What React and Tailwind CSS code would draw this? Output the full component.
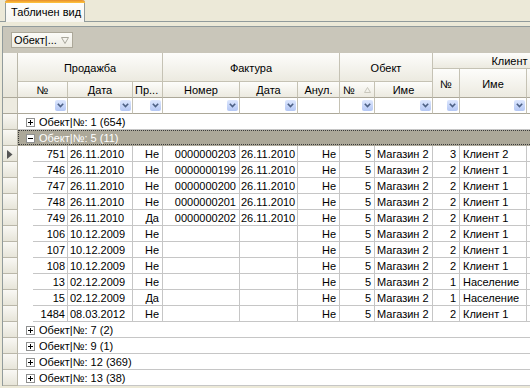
import React from 'react';

const HB = 'flex items-center justify-center border-r border-b border-[#C5C2B4] bg-linear-to-b from-[#FDFDFB] to-[#ECEAE0]';
const FB = 'flex items-center justify-end border-r border-b border-[#C5C2B4] border-b-[#ACA899] bg-white pr-[1px]';

const COLS = [
  { w: 'w-[35px]', a: 'justify-end pr-[2px]' },
  { w: 'w-[65px]', a: 'justify-start pl-[2px]' },
  { w: 'w-[30px]', a: 'justify-end pr-[3px]' },
  { w: 'w-[77px]', a: 'justify-end pr-[3px]' },
  { w: 'w-[58px]', a: 'justify-start pl-[1px]' },
  { w: 'w-[42px]', a: 'justify-end pr-[3px]' },
  { w: 'w-[35px]', a: 'justify-end pr-[3px]' },
  { w: 'w-[58px]', a: 'justify-start pl-[2px]' },
  { w: 'w-[27px]', a: 'justify-end pr-[3px]' },
  { w: 'w-[67px]', a: 'justify-start pl-[3px]' },
  { w: 'w-[60px]', a: 'justify-start pl-[2px]' },
];

const ROWS = [
  { g: 'Обект|№: 1 (654)' },
  { g: 'Обект|№: 5 (11)', sel: true, open: true },
  { d: ['751', '26.11.2010', 'Не', '0000000203', '26.11.2010', 'Не', '5', 'Магазин 2', '3', 'Клиент 2', ''], cur: true },
  { d: ['746', '26.11.2010', 'Не', '0000000199', '26.11.2010', 'Не', '5', 'Магазин 2', '2', 'Клиент 1', ''] },
  { d: ['747', '26.11.2010', 'Не', '0000000200', '26.11.2010', 'Не', '5', 'Магазин 2', '2', 'Клиент 1', ''] },
  { d: ['748', '26.11.2010', 'Не', '0000000201', '26.11.2010', 'Не', '5', 'Магазин 2', '2', 'Клиент 1', ''] },
  { d: ['749', '26.11.2010', 'Да', '0000000202', '26.11.2010', 'Не', '5', 'Магазин 2', '2', 'Клиент 1', ''] },
  { d: ['106', '10.12.2009', 'Не', '', '', 'Не', '5', 'Магазин 2', '2', 'Клиент 1', ''] },
  { d: ['107', '10.12.2009', 'Не', '', '', 'Не', '5', 'Магазин 2', '2', 'Клиент 1', ''] },
  { d: ['108', '10.12.2009', 'Не', '', '', 'Не', '5', 'Магазин 2', '2', 'Клиент 1', ''] },
  { d: ['13', '02.12.2009', 'Не', '', '', 'Не', '5', 'Магазин 2', '1', 'Население', ''] },
  { d: ['15', '02.12.2009', 'Да', '', '', 'Не', '5', 'Магазин 2', '1', 'Население', ''] },
  { d: ['1484', '08.03.2012', 'Не', '', '', 'Не', '5', 'Магазин 2', '2', 'Клиент 1', ''] },
  { g: 'Обект|№: 7 (2)' },
  { g: 'Обект|№: 9 (1)' },
  { g: 'Обект|№: 12 (369)' },
  { g: 'Обект|№: 13 (38)' },
];

function DropBtn() {
  return (
    <span className="flex h-[11px] w-[11px] items-center justify-center rounded-[2px] bg-linear-to-b from-[#DDE7FE] to-[#B4C7F4]">
      <svg width="7" height="5" viewBox="0 0 7 5">
        <path d="M0.8 0.8 L3.5 3.6 L6.2 0.8" fill="none" stroke="#4D6185" strokeWidth="1.6" />
      </svg>
    </span>
  );
}

function ExpandBox({ open }) {
  return (
    <svg width="9" height="9" viewBox="0 0 9 9" className="shrink-0">
      <rect x="0.5" y="0.5" width="8" height="8" fill="#fff" stroke="#8E8F8F" />
      <path d="M2 4.5h5" stroke="#000" />
      {!open && <path d="M4.5 2v5" stroke="#000" />}
    </svg>
  );
}

function Indicator({ cur }) {
  return (
    <div className="flex w-[15px] shrink-0 items-center justify-center border-r border-b border-[#BAB7A9] bg-linear-to-b from-[#F9F8F4] to-[#E7E5D9] pt-[2px]">
      {cur && (
        <svg width="6" height="9" viewBox="0 0 6 9">
          <path d="M0 0 L5.5 4.5 L0 9 Z" fill="#555" />
        </svg>
      )}
    </div>
  );
}

function Header() {
  return (
    <div className="flex h-[45px]">
      <div className="w-[15px] shrink-0 border-r border-b border-[#BAB7A9] border-b-[#ACA899] bg-linear-to-b from-[#F9F8F4] to-[#E7E5D9]" />
      <div className="flex shrink-0 flex-col">
        <div className={`${HB} h-[29px] pt-[2px]`}>Продажба</div>
        <div className="flex">
          <div className={`${HB} h-[16px] w-[50px] border-b-[#ACA899] pt-[1px]`}>№</div>
          <div className={`${HB} h-[16px] w-[65px] border-b-[#ACA899] pt-[1px]`}>Дата</div>
          <div className={`${HB} h-[16px] w-[30px] border-b-[#ACA899] justify-start pl-[2px] pt-[1px]`}>Пр...</div>
        </div>
      </div>
      <div className="flex shrink-0 flex-col">
        <div className={`${HB} h-[29px] pt-[2px]`}>Фактура</div>
        <div className="flex">
          <div className={`${HB} h-[16px] w-[77px] border-b-[#ACA899] pt-[1px]`}>Номер</div>
          <div className={`${HB} h-[16px] w-[58px] border-b-[#ACA899] pt-[1px]`}>Дата</div>
          <div className={`${HB} h-[16px] w-[42px] border-b-[#ACA899] pt-[1px]`}>Анул.</div>
        </div>
      </div>
      <div className="flex shrink-0 flex-col">
        <div className={`${HB} h-[29px] pt-[2px]`}>Обект</div>
        <div className="flex">
          <div className={`${HB} h-[16px] w-[35px] border-b-[#ACA899] justify-start gap-[9px] pl-[3px] pt-[1px]`}>
            <span>№</span>
            <svg width="7" height="6" viewBox="0 0 7 6">
              <path d="M3.5 0.5 L6.5 5.5 L0.5 5.5 Z" fill="none" stroke="#C9C7BC" />
            </svg>
          </div>
          <div className={`${HB} h-[16px] w-[58px] border-b-[#ACA899] pt-[1px]`}>Име</div>
        </div>
      </div>
      <div className="flex shrink-0 flex-col">
        <div className={`${HB} h-[16px] pt-[1px]`}>Клиент</div>
        <div className="flex">
          <div className={`${HB} h-[29px] w-[27px] border-b-[#ACA899] pt-[2px]`}>№</div>
          <div className={`${HB} h-[29px] w-[67px] border-b-[#ACA899] pt-[2px]`}>Име</div>
          <div className={`${HB} h-[29px] w-[60px] border-b-[#ACA899]`} />
        </div>
      </div>
    </div>
  );
}

function FilterRow() {
  return (
    <div className="flex h-[16px]">
      <div className="w-[15px] shrink-0 border-r border-b border-[#BAB7A9] border-b-[#ACA899] bg-[#EDEBE0]" />
      <div className={`${FB} w-[50px]`}><DropBtn /></div>
      <div className={`${FB} w-[65px]`}><DropBtn /></div>
      <div className={`${FB} w-[30px]`}><DropBtn /></div>
      <div className={`${FB} w-[77px]`}><DropBtn /></div>
      <div className={`${FB} w-[58px]`}><DropBtn /></div>
      <div className={`${FB} w-[42px] bg-[#EDEBE0]`} />
      <div className={`${FB} w-[35px]`}><DropBtn /></div>
      <div className={`${FB} w-[58px]`}><DropBtn /></div>
      <div className={`${FB} w-[27px]`}><DropBtn /></div>
      <div className={`${FB} w-[67px]`}><DropBtn /></div>
      <div className={`${FB} w-[60px]`}><DropBtn /></div>
    </div>
  );
}

function GroupRow({ row }) {
  return (
    <div className="flex h-[16px]">
      <Indicator />
      <div
        className={`relative flex flex-1 items-center border-b pl-[8px] pt-[2px] ${
          row.sel ? 'border-[#ACA899] bg-[#ACA899] text-white' : 'border-[#C6C6C6] bg-white'
        }`}
      >
        <ExpandBox open={row.open} />
        <span className="ml-[4px]">{row.g}</span>
        {row.sel && <div className="absolute inset-0 border border-dotted border-[#3A3A3A]" />}
      </div>
    </div>
  );
}

function DataRow({ row }) {
  return (
    <div className="flex h-[16px]">
      <Indicator cur={row.cur} />
      <div className="w-[15px] shrink-0 bg-white" />
      {COLS.map((c, i) => (
        <div
          key={i}
          className={`flex shrink-0 items-center whitespace-nowrap border-r border-b border-[#C6C6C6] bg-white pt-[2px] ${c.w} ${c.a}`}
        >
          {row.d[i]}
        </div>
      ))}
    </div>
  );
}

export default function App() {
  return (
    <div className="h-[388px] w-[530px] overflow-hidden bg-[#ECE9D8] font-['Liberation_Sans',Arial,sans-serif] text-[11px] leading-none text-black">
      <div className="flex h-[22px] border-b border-[#919B9C] pl-[5px]">
        <div className="relative -mb-px flex h-[22px] w-[80px] items-center rounded-t-[3px] border-x border-[#919B9C] bg-linear-to-b from-white to-[#F6F5F0] pl-[5px] pt-[3px]">
          <div className="absolute -left-px -right-px top-0 h-[3px] rounded-t-[3px] bg-linear-to-b from-[#E68B2C] to-[#FFC73C]" />
          Табличен вид
        </div>
      </div>
      <div className="pl-[2px] pt-[4px]">
        <div className="w-[600px] border-l border-t border-[#919B9C]">
          <div className="flex h-[26px] items-start bg-[#C9C6BA] pl-[8px] pt-[5px]">
            <div className="flex h-[16px] w-[62px] items-center border border-[#ACA899] bg-linear-to-b from-[#FBFBF8] to-[#EEECE3] pl-[2px] pr-[3px] pt-[1px]">
              <span>Обект|...</span>
              <svg width="8" height="7" viewBox="0 0 8 7" className="ml-auto">
                <path d="M0.5 0.5 L7.5 0.5 L4 6.5 Z" fill="none" stroke="#A9A79C" />
              </svg>
            </div>
          </div>
          <Header />
          <FilterRow />
          {ROWS.map((r, i) => (r.g ? <GroupRow key={i} row={r} /> : <DataRow key={i} row={r} />))}
        </div>
      </div>
    </div>
  );
}
